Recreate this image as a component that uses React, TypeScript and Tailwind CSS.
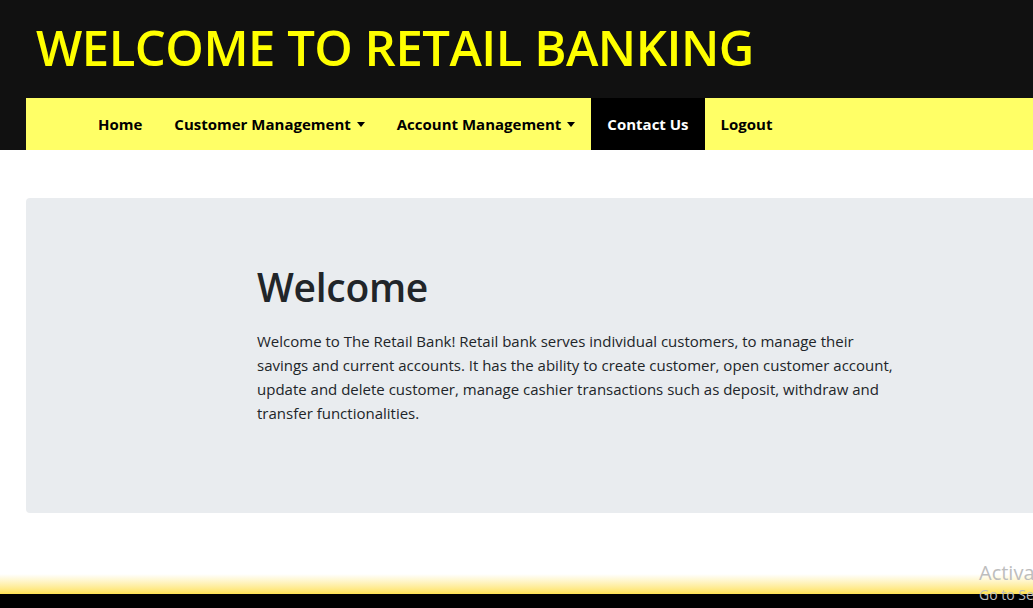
import React from "react";

const font = { fontFamily: '"Open Sans", "Noto Sans", sans-serif' };

function Caret() {
  return (
    <span className="ml-[6px] inline-block h-0 w-0 border-x-[4.5px] border-t-[5px] border-x-transparent border-t-black align-[2px]" />
  );
}

export default function App() {
  return (
    <div className="relative h-[608px] w-[1033px] overflow-hidden bg-white" style={font}>
      <header className="bg-[#111111]">
        <div className="flex h-[98px] items-start pl-[36px] pt-[23px]">
          <h1 className="text-[49px] font-semibold leading-none tracking-[-0.5px] text-[#ffff00]">
            WELCOME TO RETAIL BANKING
          </h1>
        </div>
        <div className="pl-[26px]">
          <nav className="flex h-[52px] items-stretch bg-[#ffff66] pl-[56px] text-[15px] font-bold text-black">
            <a className="flex items-center px-[16px]">Home</a>
            <a className="flex items-center px-[16px]">
              Customer Management
              <Caret />
            </a>
            <a className="flex items-center px-[16px]">
              Account Management
              <Caret />
            </a>
            <a className="flex items-center bg-black px-[16px] text-white">Contact Us</a>
            <a className="flex items-center px-[16px]">Logout</a>
          </nav>
        </div>
      </header>

      <main className="pl-[26px] pt-[48px]">
        <section className="h-[315px] rounded-l-[4px] bg-[#e9ecef] pl-[231px] pt-[65px] text-[#212529]">
          <h2 className="text-[39px] font-semibold leading-[48px] tracking-[-0.3px]">Welcome</h2>
          <p className="mt-[18px] w-[660px] text-[15px] leading-[24px]">
            <span className="block">Welcome to The Retail Bank! Retail bank serves individual customers, to manage their</span>
            <span className="block">savings and current accounts. It has the ability to create customer, open customer account,</span>
            <span className="block">update and delete customer, manage cashier transactions such as deposit, withdraw and</span>
            <span className="block">transfer functionalities.</span>
          </p>
        </section>
      </main>

      <footer className="absolute bottom-0 left-0 right-0">
        <div className="h-[20px] bg-gradient-to-b from-white to-[#ffe150]" />
        <div className="h-[14px] bg-black" />
      </footer>

      <div className="pointer-events-none absolute left-[979px] top-[560px] whitespace-nowrap text-[#bdbdbd]">
        <div className="text-[20px] leading-[26px]">Activate Windows</div>
        <div className="text-[14px] leading-[18px]">Go to Settings</div>
      </div>
    </div>
  );
}
